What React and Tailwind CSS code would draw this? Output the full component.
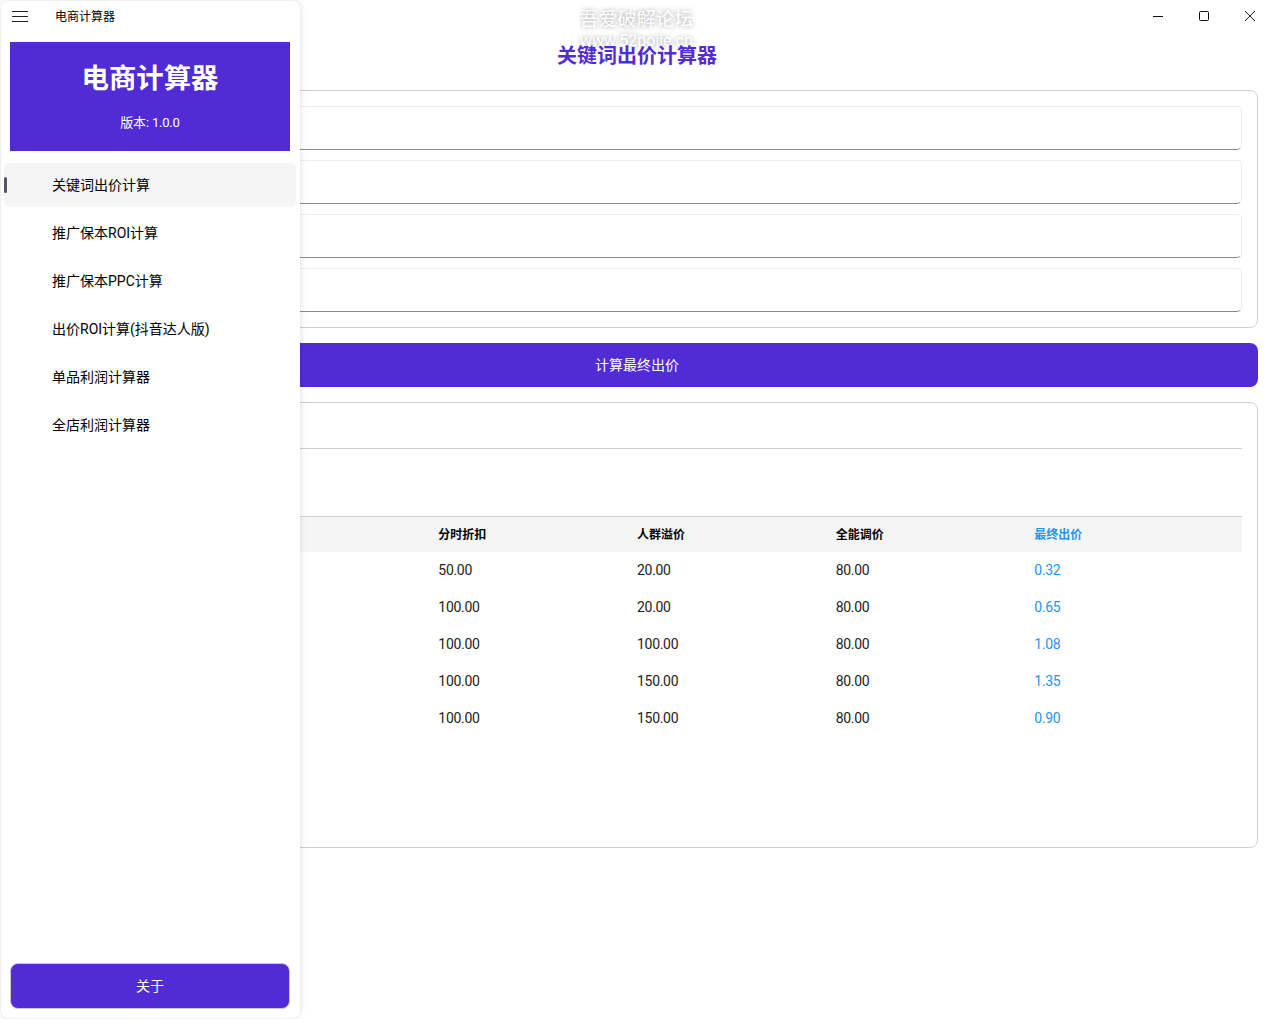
const navItems = [
  "关键词出价计算",
  "推广保本ROI计算",
  "推广保本PPC计算",
  "出价ROI计算(抖音达人版)",
  "单品利润计算器",
  "全店利润计算器",
];

const rows = [
  ["50.00", "20.00", "80.00", "0.32"],
  ["100.00", "20.00", "80.00", "0.65"],
  ["100.00", "100.00", "80.00", "1.08"],
  ["100.00", "150.00", "80.00", "1.35"],
  ["100.00", "150.00", "80.00", "0.90"],
];

const InputBox = () => (
  <div className="h-11 rounded-[5px] border border-[#ececec] border-b-[#8a8a8a] bg-white" />
);

const Sidebar = () => (
  <aside className="absolute left-px top-px z-10 flex h-[1017px] w-[299px] flex-col rounded-lg bg-white shadow-[0_0_6px_rgba(0,0,0,0.14)]">
    {/* Title bar */}
    <div className="flex h-[41px] items-start pl-[11px] pt-[10px]">
      <svg width="16" height="12" viewBox="0 0 16 12" className="text-[#222]">
        <path d="M0 .5h16M0 5.5h16M0 10.5h16" stroke="currentColor" strokeWidth="1" fill="none" />
      </svg>
      <span className="ml-[27px] text-xs leading-[13px] text-black">电商计算器</span>
    </div>

    {/* Header */}
    <div className="ml-[9px] flex h-[109px] w-[280px] flex-col items-center bg-[#512bd4] text-white">
      <div className="mt-[19px] text-[27.4px] font-bold leading-[36px]">电商计算器</div>
      <div className="mt-[17px] text-[13px] leading-[18px] tracking-[-0.2px]">版本: 1.0.0</div>
    </div>

    {/* Nav */}
    <nav className="mt-3 flex flex-col gap-1 pl-[3px] pr-1">
      {navItems.map((item, i) => (
        <div
          key={item}
          className={`relative flex h-11 items-center rounded-md pl-12 text-sm text-black ${i === 0 ? "bg-[#f5f5f5]" : ""}`}
        >
          {i === 0 && <span className="absolute left-0 top-[14px] h-4 w-[3px] rounded-sm bg-[#55556a]" />}
          {item}
        </div>
      ))}
    </nav>

    {/* About */}
    <button className="mb-[9px] ml-[9px] mt-auto h-[46px] w-[280px] rounded-lg border border-[#c9c6d4] bg-[#512bd4] text-sm text-white">
      关于
    </button>
  </aside>
);

export default function App() {
  return (
    <div className="relative h-[1019px] overflow-hidden bg-white font-['Roboto','Noto_Sans_CJK_SC',sans-serif]">
      <Sidebar />

      {/* Window buttons */}
      <div className="absolute right-0 top-0 z-10 flex h-8 items-center text-[#111]">
        <span className="flex w-[46px] justify-center">
          <svg width="10" height="10" viewBox="0 0 10 10">
            <path d="M0 5.5h10" stroke="currentColor" fill="none" />
          </svg>
        </span>
        <span className="flex w-[46px] justify-center">
          <svg width="10" height="10" viewBox="0 0 10 10">
            <rect x=".5" y=".5" width="9" height="9" rx="1" stroke="currentColor" fill="none" />
          </svg>
        </span>
        <span className="flex w-[46px] justify-center">
          <svg width="10" height="10" viewBox="0 0 10 10">
            <path d="M0 0l10 10M10 0L0 10" stroke="currentColor" strokeWidth=".9" fill="none" />
          </svg>
        </span>
      </div>

      {/* Forum watermark */}
      <div className="absolute left-0 top-[9px] w-[1273px] text-center text-white [text-shadow:0_0_5px_rgba(0,0,0,0.4)]">
        <div className="text-[19px] leading-[22px]">吾爱破解论坛</div>
        <div className="text-base leading-[19px]">www.52pojie.cn</div>
      </div>

      <main className="flex flex-col pl-4 pr-[15px] pt-10">
        <h1 className="relative h-[32px] text-center text-xl font-bold leading-[32px] text-[#512bd4]">关键词出价计算器</h1>

        <section className="mt-[18px] flex flex-col gap-[10px] rounded-lg border border-[#d0d0d0] p-[15px]">
          <InputBox />
          <InputBox />
          <InputBox />
          <InputBox />
        </section>

        <button className="mt-[15px] h-11 rounded-lg bg-[#512bd4] text-sm text-white">计算最终出价</button>

        <section className="mt-[15px] h-[446px] rounded-lg border border-[#d0d0d0] px-[15px]">
          <div className="h-[46px] border-b border-[#d0d0d0]" />
          <div className="mt-[67px] grid h-9 grid-cols-6 items-center border-t border-[#d0d0d0] bg-[#f5f5f5] px-[9px] text-xs font-bold text-black">
            <span />
            <span />
            <span>分时折扣</span>
            <span>人群溢价</span>
            <span>全能调价</span>
            <span className="text-[#2196f3]">最终出价</span>
          </div>
          {rows.map((row, i) => (
            <div key={i} className="grid h-[37px] grid-cols-6 items-center px-[9px] pb-0.5 text-sm tracking-[-0.3px] text-[#222]">
              <span />
              <span />
              <span>{row[0]}</span>
              <span>{row[1]}</span>
              <span>{row[2]}</span>
              <span className="text-[#2196f3]">{row[3]}</span>
            </div>
          ))}
        </section>
      </main>
    </div>
  );
}
